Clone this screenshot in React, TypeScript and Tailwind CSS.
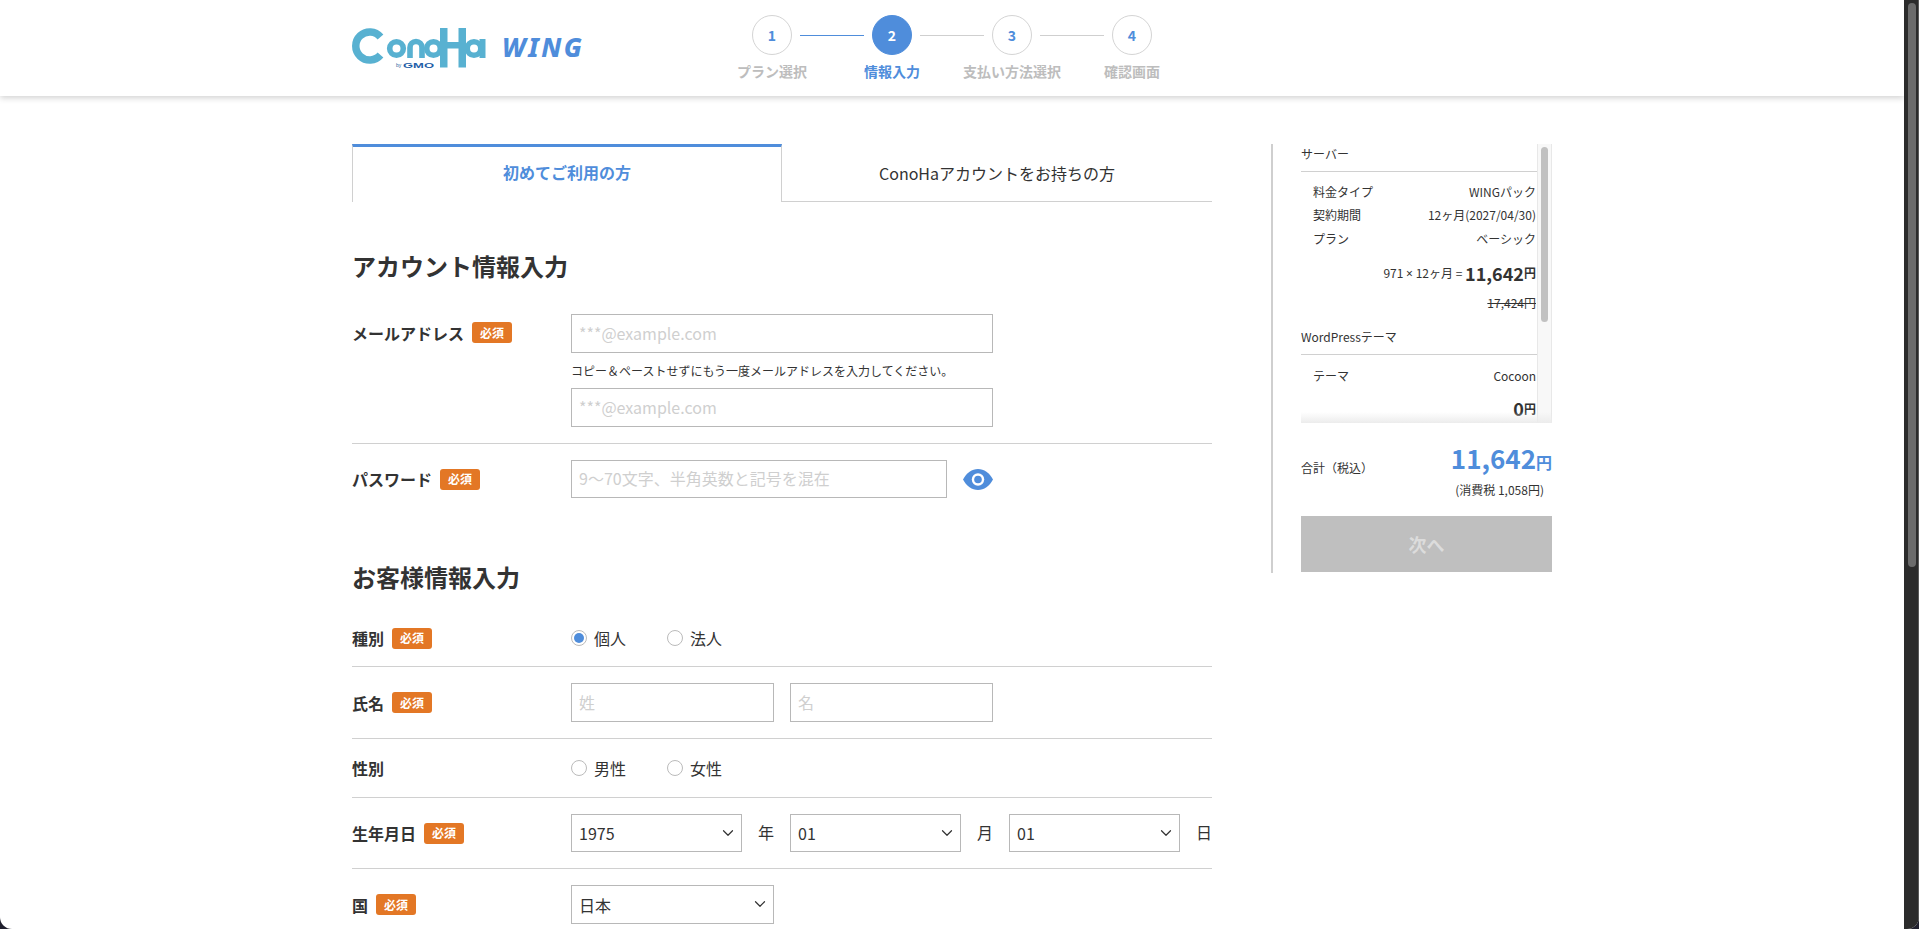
import React from "react";
import { ChevronDown } from "lucide-react";

const Badge = () => (
  <span className="flex h-[21px] w-[40px] items-center justify-center rounded-[3px] bg-[#e37725] text-[12px] font-bold leading-none text-white">
    必須
  </span>
);

const Label = ({ text, required = true }: { text: string; required?: boolean }) => (
  <div className="flex w-[219px] shrink-0 items-center gap-[8px]">
    <span className="text-[16px] font-bold leading-none text-[#333]">{text}</span>
    {required && <Badge />}
  </div>
);

const Field = ({ placeholder, className }: { placeholder: string; className: string }) => (
  <input
    placeholder={placeholder}
    className={`border border-[#b8b8b8] bg-white px-[7px] pb-[2px] text-[16px] text-[#333] outline-none placeholder:text-[#cfcfcf] ${className}`}
  />
);

const Select = ({ value, className }: { value: string; className: string }) => (
  <div className={`relative flex shrink-0 items-center border border-[#b8b8b8] bg-white pl-[7px] text-[16px] text-[#333] ${className}`}>
    {value}
    <ChevronDown size={18} strokeWidth={1.6} className="absolute right-[4px] top-[9px] text-[#333]" />
  </div>
);

const Radio = ({ text, checked = false }: { text: string; checked?: boolean }) => (
  <div className="flex w-[96px] items-center gap-[7px]">
    <span className="flex h-[16px] w-[16px] items-center justify-center rounded-full border border-[#bbb] bg-white">
      {checked && <span className="h-[10px] w-[10px] rounded-full bg-[#4f8ddb]" />}
    </span>
    <span className="text-[16px] text-[#333]">{text}</span>
  </div>
);

const Step = ({ n, label, state }: { n: number; label: string; state: "done" | "active" | "todo" }) => (
  <div className="relative flex w-[120px] flex-col items-center pt-[15px]">
    <div
      className={`flex h-[40px] w-[40px] items-center justify-center rounded-full border text-[14px] font-bold ${
        state === "active" ? "border-[#4f8ddb] bg-[#4f8ddb] text-white" : "border-[#d4d4d4] bg-white text-[#4f8ddb]"
      }`}
    >
      {n}
    </div>
    <div className={`mt-[6px] whitespace-nowrap text-[14px] font-bold leading-[20px] ${state === "active" ? "text-[#4f8ddb]" : "text-[#bdbdbd]"}`}>
      {label}
    </div>
    {n < 4 && (
      <span className={`absolute left-[88px] top-[35px] h-px w-[64px] ${state === "done" ? "bg-[#4f8ddb]" : "bg-[#cfcfcf]"}`} />
    )}
  </div>
);

const Logo = () => (
  <svg width="135" height="40" viewBox="0 0 135 40" className="shrink-0">
    <g fill="none" stroke="#58b1d1">
      <path d="M28.5 9A14 14 0 1 0 28.5 27" strokeWidth="7.5" />
      <circle cx="44.5" cy="20.5" r="6.8" strokeWidth="5.6" />
      <path d="M58 30V19.5a6 6 0 0 1 12 0V30" strokeWidth="5.6" />
      <circle cx="81.5" cy="20.5" r="6.8" strokeWidth="5.6" />
      <circle cx="122" cy="20.5" r="6.8" strokeWidth="5.6" />
    </g>
    <g fill="#58b1d1">
      <rect x="88" y="0" width="7.5" height="39.5" />
      <rect x="106.5" y="0" width="7.5" height="39.5" />
      <rect x="95" y="14" width="12" height="6.5" />
      <rect x="127.5" y="11" width="6" height="19" />
    </g>
    <text x="44" y="39" fontFamily="Liberation Sans" fontSize="5" fill="#2f5f9e">by</text>
    <text x="51" y="39.5" fontFamily="Liberation Sans" fontSize="8" fontWeight="700" fill="#1f5fa8" textLength="31" lengthAdjust="spacingAndGlyphs">GMO</text>
  </svg>
);

const SummaryRow = ({ l, r }: { l: string; r: string }) => (
  <div className="flex h-[23.5px] items-center justify-between pl-[12px] pr-px text-[12px] text-[#333]">
    <span>{l}</span>
    <span>{r}</span>
  </div>
);

export default function App() {
  return (
    <div className="h-[929px] w-[1919px] overflow-hidden bg-[#20202e] font-['Noto_Sans_CJK_JP','Noto_Sans',sans-serif]">
      <div className="flex h-[929px] overflow-hidden rounded-b-[12px] bg-white">
        <div className="h-full w-[1904px] shrink-0">
          <header className="h-[96px] bg-white shadow-[0_2px_6px_rgba(0,0,0,0.18)]">
            <div className="mx-auto flex h-full w-[1200px]">
              <div className="flex w-[360px] items-start pt-[28px]">
                <Logo />
                <span className="ml-[15px] mt-[3px] font-['Noto_Sans',sans-serif] text-[26px] font-extrabold italic leading-[32px] tracking-[2.5px] text-[#4f8ddb]">
                  WING
                </span>
              </div>
              <div className="flex">
                <Step n={1} label="プラン選択" state="done" />
                <Step n={2} label="情報入力" state="active" />
                <Step n={3} label="支払い方法選択" state="todo" />
                <Step n={4} label="確認画面" state="todo" />
              </div>
            </div>
          </header>

          <main className="mx-auto flex w-[1200px] items-start pt-[48px]">
            <div className="w-[860px] shrink-0">
              <div className="grid h-[58px] grid-cols-2">
                <div className="flex items-center justify-center border-x border-t-[3px] border-x-[#d0d0d0] border-t-[#4f8ddb] pb-[5px] text-[16px] font-bold text-[#4f8ddb]">
                  初めてご利用の方
                </div>
                <div className="flex items-center justify-center border-b border-[#d0d0d0] text-[16px] text-[#333]">
                  ConoHaアカウントをお持ちの方
                </div>
              </div>

              <h2 className="mt-[46px] text-[24px] font-bold leading-[36px] text-[#333]">アカウント情報入力</h2>

              <div className="mt-[30px] flex border-b border-[#d0d0d0] pb-[16px]">
                <div className="flex h-[37px]">
                  <Label text="メールアドレス" />
                </div>
                <div className="flex w-[422px] flex-col">
                  <Field placeholder="***@example.com" className="h-[39px] w-full" />
                  <p className="mt-[9px] mb-[8px] text-[12px] leading-[18px] text-[#333]">
                    コピー＆ペーストせずにもう一度メールアドレスを入力してください。
                  </p>
                  <Field placeholder="***@example.com" className="h-[39px] w-full" />
                </div>
              </div>

              <div className="flex items-center pt-[16px]">
                <div className="flex h-[38px]">
                  <Label text="パスワード" />
                </div>
                <Field placeholder="9〜70文字、半角英数と記号を混在" className="h-[38px] w-[376px]" />
                <svg width="30" height="21" viewBox="0 0 30 21" className="ml-[16px] shrink-0">
                  <path d="M0 10.5C3.5 4 9 0 15 0s11.5 4 15 10.5C26.5 17 21 21 15 21S3.5 17 0 10.5Z" fill="#4f8ddb" />
                  <circle cx="15" cy="10.5" r="6.2" fill="#fff" />
                  <circle cx="15" cy="10.5" r="3.8" fill="#4f8ddb" />
                </svg>
              </div>

              <h2 className="mt-[61px] mb-[30px] text-[24px] font-bold leading-[36px] text-[#333]">お客様情報入力</h2>

              <div className="flex items-center border-b border-[#d0d0d0] pb-[15px]">
                <div className="flex h-[26px]">
                  <Label text="種別" />
                </div>
                <Radio text="個人" checked />
                <Radio text="法人" />
              </div>

              <div className="flex items-center border-b border-[#d0d0d0] py-[16px]">
                <div className="flex h-[39px]">
                  <Label text="氏名" />
                </div>
                <div className="flex w-[422px] gap-[16px]">
                  <Field placeholder="姓" className="h-[39px] w-[203px]" />
                  <Field placeholder="名" className="h-[39px] w-[203px]" />
                </div>
              </div>

              <div className="flex items-center border-b border-[#d0d0d0] py-[16px]">
                <div className="flex h-[26px]">
                  <Label text="性別" required={false} />
                </div>
                <Radio text="男性" />
                <Radio text="女性" />
              </div>

              <div className="flex items-center border-b border-[#d0d0d0] py-[16px]">
                <div className="flex h-[38px]">
                  <Label text="生年月日" />
                </div>
                <Select value="1975" className="h-[38px] w-[171px]" />
                <span className="w-[48px] shrink-0 pb-[2px] text-center text-[16px] text-[#333]">年</span>
                <Select value="01" className="h-[38px] w-[171px]" />
                <span className="w-[48px] shrink-0 pb-[2px] text-center text-[16px] text-[#333]">月</span>
                <Select value="01" className="h-[38px] w-[171px]" />
                <span className="w-[32px] shrink-0 pb-[2px] text-right text-[16px] text-[#333]">日</span>
              </div>

              <div className="flex items-center py-[16px]">
                <div className="flex h-[39px]">
                  <Label text="国" />
                </div>
                <Select value="日本" className="h-[39px] w-[203px]" />
              </div>
            </div>

            <aside className="ml-[59px] h-[429px] w-[281px] border-l-2 border-[#cfcfcf] pl-[28px]">
              <div className="relative h-[279px] overflow-hidden">
                <div className="flex h-full">
                  <div className="w-[236px] shrink-0">
                    <div className="flex h-[28px] items-center border-b border-[#d0d0d0] pb-[8px] text-[12px] text-[#333]">サーバー</div>
                    <div className="pt-[8px]">
                      <SummaryRow l="料金タイプ" r="WINGパック" />
                      <SummaryRow l="契約期間" r="12ヶ月(2027/04/30)" />
                      <SummaryRow l="プラン" r="ベーシック" />
                    </div>
                    <div className="mt-[7.5px] flex h-[30px] items-center justify-end pr-px text-[12px] text-[#333]">
                      <span>
                        971 <span className="font-['Noto_Sans',sans-serif]">×</span> 12ヶ月 =&nbsp;
                      </span>
                      <span className="text-[18px] font-bold">11,642</span>
                      <span className="font-bold">円</span>
                    </div>
                    <div className="mt-[3px] flex h-[24px] items-center justify-end pr-px text-[12px] text-[#333] line-through">17,424円</div>
                    <div className="mt-[5px] flex h-[35px] items-center border-b border-[#d0d0d0] text-[12px] text-[#333]">WordPressテーマ</div>
                    <div className="pt-[9px]">
                      <SummaryRow l="テーマ" r="Cocoon" />
                    </div>
                    <div className="mt-[8px] flex h-[26px] items-center justify-end pr-px text-[12px] text-[#333]">
                      <span className="text-[18px] font-bold">0</span>
                      <span className="font-bold">円</span>
                    </div>
                  </div>
                  <div className="h-full w-[15px] shrink-0 border-x border-[#e8e8e8] bg-[#f8f8f8] pl-[3px] pt-[3px]">
                    <div className="h-[175px] w-[7px] rounded-full bg-[#c1c1c1]" />
                  </div>
                </div>
                <div className="absolute bottom-0 left-0 h-[11px] w-full bg-gradient-to-b from-transparent to-[#ececec]" />
              </div>

              <div className="mt-[16px] flex h-[40px] items-center justify-between">
                <span className="mt-[18px] text-[12px] text-[#333]">合計（税込）</span>
                <span className="pb-[3px] font-bold leading-none text-[#4f8ddb]">
                  <span className="text-[26px]">11,642</span>
                  <span className="text-[16px]">円</span>
                </span>
              </div>
              <div className="flex h-[22px] items-center justify-end pr-[8px] text-[12px] text-[#333]">(消費税 1,058円)</div>
              <div className="mt-[15px] flex h-[56px] items-center justify-center bg-[#bfbfbf] text-[18px] font-bold text-[#dcdcdc]">次へ</div>
            </aside>
          </main>
        </div>

        <div className="h-full w-[15px] shrink-0 border-r border-[#5a5a5a] bg-[#2b2b2b] pl-[4px] pt-[3px]">
          <div className="h-[564px] w-[8px] rounded-full bg-[#6b6b6b]" />
        </div>
      </div>
    </div>
  );
}
